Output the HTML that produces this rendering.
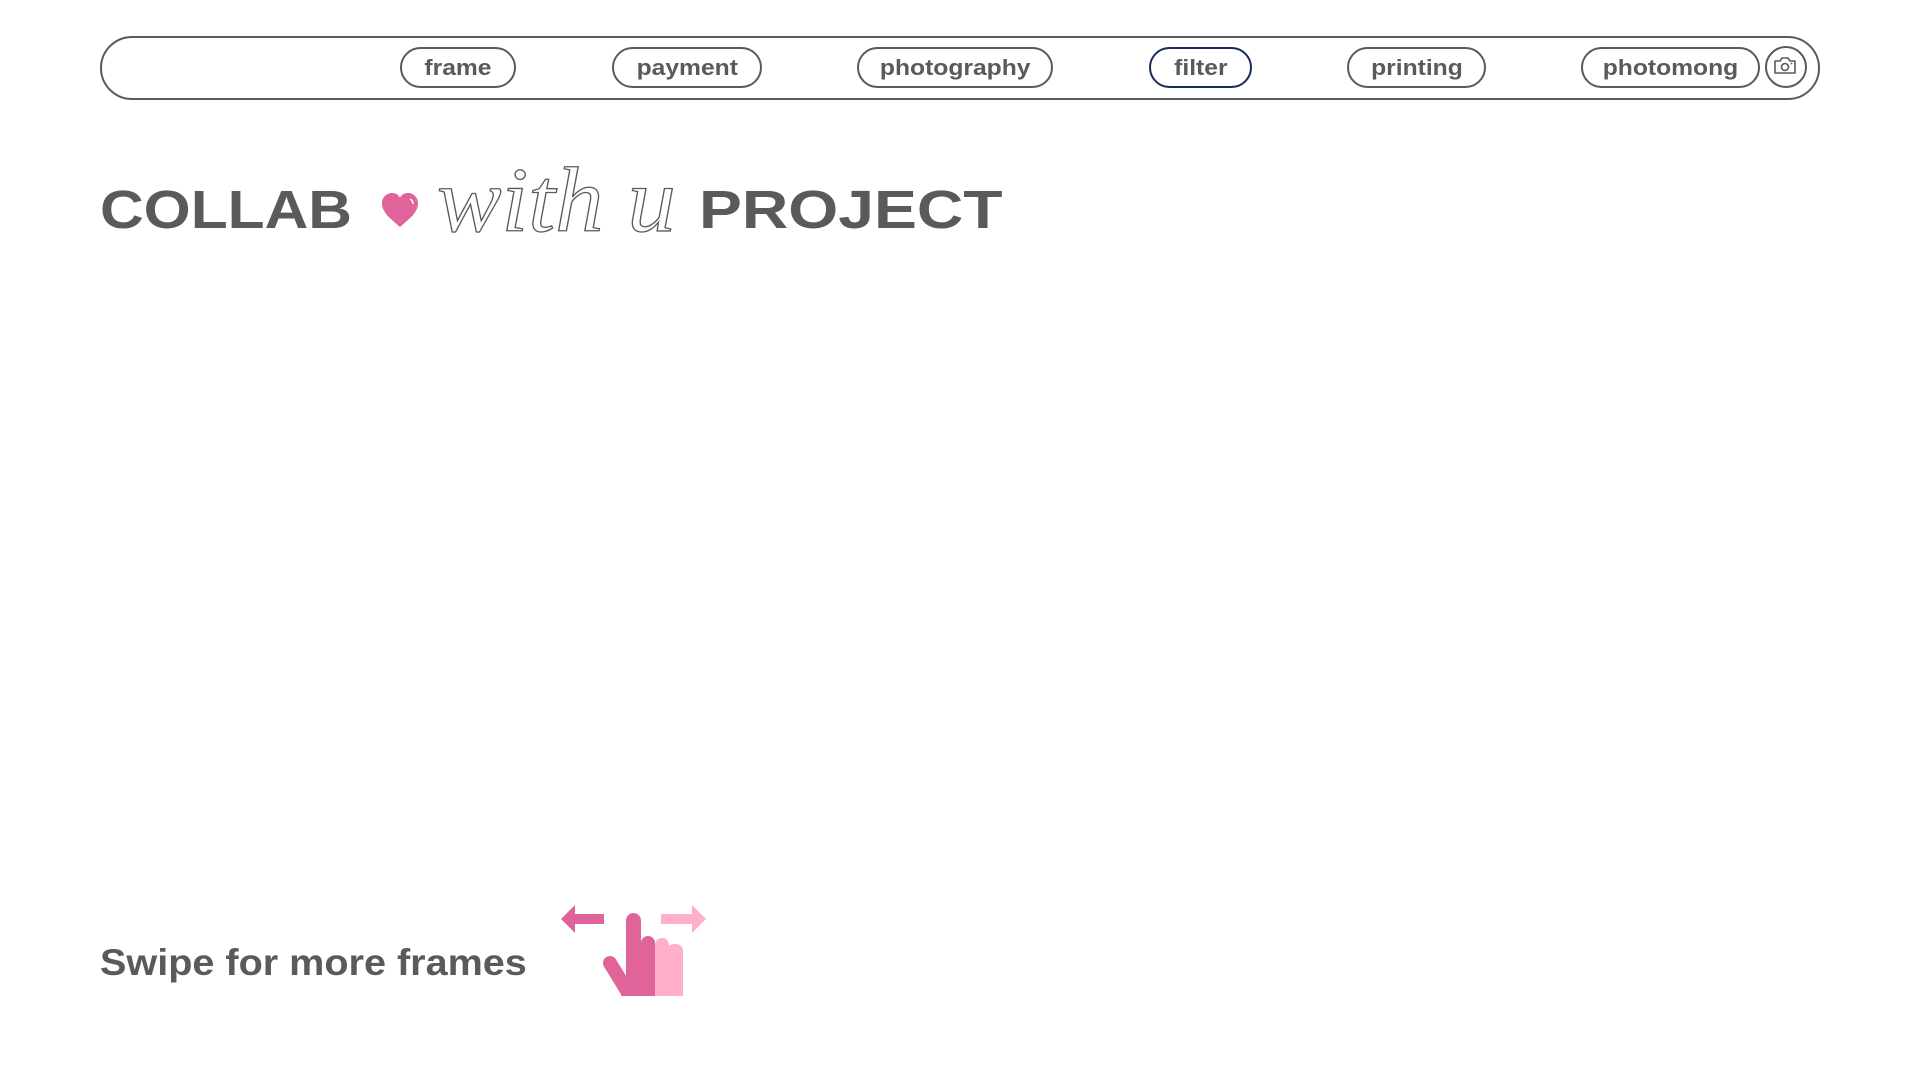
<!DOCTYPE html>
<html><head><meta charset="utf-8"><style>
body{margin:0;width:1920px;height:1080px;background:#fff;position:relative;overflow:hidden;font-family:"Liberation Sans",sans-serif;color:#5a5a5a}
.nav{position:absolute;left:100px;top:36px;width:1716px;height:60px;border:2px solid #5a5a5a;border-radius:32px}
.pill{position:absolute;top:47px;height:37px;border:2px solid #5a5a5a;border-radius:21px;font-weight:bold;font-size:22px;line-height:37px;text-align:center;box-sizing:content-box}
.pill span{display:inline-block;transform:scaleX(1.12)}
.h{position:absolute;top:180px;font-weight:bold;font-size:54px;line-height:60px;white-space:nowrap;transform-origin:left top}
</style></head><body>
<div class="nav"></div>
<div class="pill" style="left:400px;width:112px"><span>frame</span></div>
<div class="pill" style="left:612px;width:146px"><span>payment</span></div>
<div class="pill" style="left:857px;width:192px"><span>photography</span></div>
<div class="pill" style="left:1149px;width:99px;border-color:#1b2a5e"><span>filter</span></div>
<div class="pill" style="left:1347px;width:135px"><span>printing</span></div>
<div class="pill" style="left:1581px;width:175px"><span>photomong</span></div>
<div style="position:absolute;left:1765px;top:46px;width:38px;height:38px;border:2px solid #5a5a5a;border-radius:50%"></div>
<svg style="position:absolute;left:1772px;top:54px" width="26" height="24" viewBox="0 0 26 24"><path d="M3 7h5l2-3h6l2 3h5v12H3z" fill="none" stroke="#5a5a5a" stroke-width="1.6" stroke-linejoin="round"/><circle cx="13" cy="13" r="3.5" fill="none" stroke="#5a5a5a" stroke-width="1.6"/><circle cx="19.5" cy="9.5" r="0.9" fill="#5a5a5a"/></svg>
<div class="h" style="left:100px;transform:scaleX(1.12)">COLLAB</div>
<svg style="position:absolute;left:381px;top:192px" width="38" height="36" viewBox="0 0 38 36"><path d="M19 35C10 27 1 21 1 11 1 5 6 1 11 1c4 0 7 2 8 5 1-3 4-5 8-5 5 0 10 4 10 10 0 10-9 16-18 24z" fill="#e0649a"/><path d="M29 7c2 1 3 3 3 5" stroke="#fff" stroke-width="1.5" fill="none"/></svg>
<div style="position:absolute;left:437px;top:150px;font-family:'Liberation Serif',serif;font-style:italic;font-size:92px;line-height:100px;color:transparent;-webkit-text-stroke:1.3px #5a5a5a;white-space:nowrap;transform:scaleX(1.05);transform-origin:left top">with u</div>
<div class="h" style="left:699px;transform:scaleX(1.19)">PROJECT</div>
<div style="position:absolute;left:100px;top:941px;font-weight:bold;font-size:37px;line-height:44px;white-space:nowrap;transform:scaleX(1.07);transform-origin:left top">Swipe for more frames</div>
<svg style="position:absolute;left:561px;top:904px" width="148" height="92" viewBox="0 0 148 92">
<path d="M0 15L14 1V10H43V20H14V29z" fill="#e0649a"/>
<path d="M145 15L131 1V10H100V20H131V29z" fill="#ffb0c8"/>
<rect x="94" y="34" width="14" height="58" rx="7" fill="#ffb0c8"/>
<rect x="106" y="40" width="16" height="52" rx="7" fill="#ffb0c8"/>
<rect x="94" y="80" width="28" height="12" fill="#ffb0c8"/>
<line x1="49" y1="59" x2="68" y2="90" stroke="#e0649a" stroke-width="14" stroke-linecap="round"/>
<rect x="65" y="9" width="15" height="83" rx="7.5" fill="#e0649a"/>
<rect x="80" y="32" width="14" height="60" rx="7" fill="#e0649a"/>
<rect x="60" y="78" width="34" height="14" fill="#e0649a"/>
</svg>
</body></html>
